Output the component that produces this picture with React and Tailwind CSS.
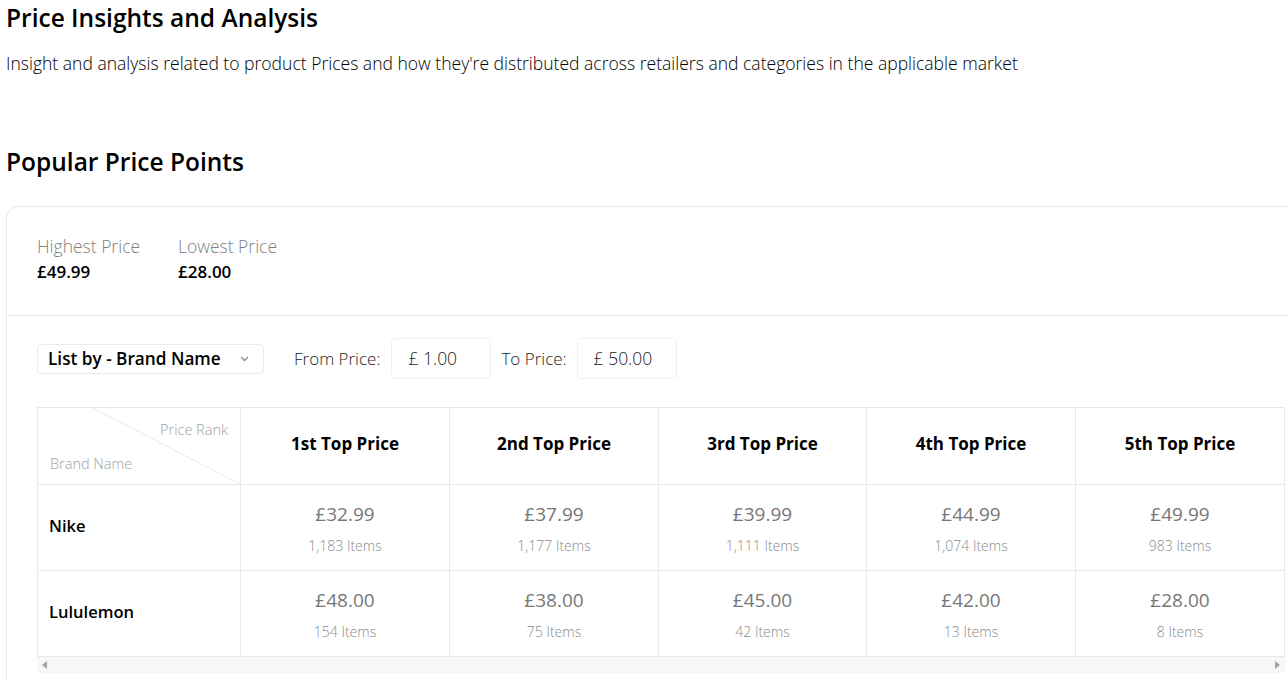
import React from "react";

const cols = ["1st Top Price", "2nd Top Price", "3rd Top Price", "4th Top Price", "5th Top Price"];
const rows = [
  { name: "Nike", cells: [["£32.99", "1,183 Items"], ["£37.99", "1,177 Items"], ["£39.99", "1,111 Items"], ["£44.99", "1,074 Items"], ["£49.99", "983 Items"]] },
  { name: "Lululemon", cells: [["£48.00", "154 Items"], ["£38.00", "75 Items"], ["£45.00", "42 Items"], ["£42.00", "13 Items"], ["£28.00", "8 Items"]] },
];

export default function App() {
  return (
    <div className="h-[681px] w-[1288px] overflow-hidden bg-white text-black" style={{ fontFamily: '"Open Sans", sans-serif' }}>
      <div className="pl-[6px]">
        <h1 className="pt-[2px] text-[24.5px] font-semibold leading-[32px]">Price Insights and Analysis</h1>
        <p className="mt-[18px] whitespace-nowrap text-[17.55px] font-light leading-[22px]">Insight and analysis related to product Prices and how they're distributed across retailers and categories in the applicable market</p>
        <h2 className="mt-[72px] text-[24.5px] font-semibold leading-[32px]">Popular Price Points</h2>
        <div className="mt-[28px] w-[1320px] rounded-[12px] border border-[#e8e8e8] pb-[40px]">
          <div className="flex gap-[38px] px-[30px] pt-[28px] pb-[32px]">
            <div>
              <div className="text-[17.5px] font-light leading-[22px] text-[#808080]">Highest Price</div>
              <div className="mt-[4px] text-[17px] font-semibold leading-[22px]">£49.99</div>
            </div>
            <div>
              <div className="text-[17.5px] font-light leading-[22px] text-[#808080]">Lowest Price</div>
              <div className="mt-[4px] text-[17px] font-semibold leading-[22px]">£28.00</div>
            </div>
          </div>
          <div className="border-t border-[#e8e8e8] px-[30px] pt-[22px]">
            <div className="flex items-center">
              <div className="flex h-[30px] w-[227px] items-center justify-between rounded-[4px] border border-[#ebebeb] pl-[10px] pr-[14px]">
                <span className="text-[17.2px] font-semibold">List by - Brand Name</span>
                <svg width="9" height="6" viewBox="0 0 9 6" fill="none"><path d="M1 1l3.5 3.5L8 1" stroke="#8c8c8c" strokeWidth="1.3" /></svg>
              </div>
              <span className="ml-[30px] text-[17px] font-light text-[#222]">From Price:</span>
              <div className="ml-[11px] flex h-[41px] w-[100px] items-center rounded-[4px] border border-[#f0f0f0] pl-[16px] text-[17.5px] font-light text-[#222]">£ 1.00</div>
              <span className="ml-[10px] text-[17px] font-light text-[#222]">To Price:</span>
              <div className="ml-[10px] flex h-[41px] w-[100px] items-center rounded-[4px] border border-[#f0f0f0] pl-[16px] text-[17.5px] font-light text-[#222]">£ 50.00</div>
            </div>
            <div className="mt-[28px] w-[1248px]">
              <table className="w-[1248px] table-fixed border-collapse">
                <colgroup>
                  <col className="w-[203px]" />
                  <col className="w-[209px]" />
                  <col className="w-[209px]" />
                  <col className="w-[208px]" />
                  <col className="w-[209px]" />
                  <col className="w-[209px]" />
                </colgroup>
                <thead>
                  <tr className="h-[77px]">
                    <th className="relative border border-[#e8e8e8] p-0 font-normal">
                      <svg className="absolute inset-0 h-full w-full" preserveAspectRatio="none" viewBox="0 0 203 77">
                        <line x1="55" y1="0" x2="203" y2="77" stroke="#e8e8e8" strokeWidth="1" />
                      </svg>
                      <div className="absolute right-[12px] top-[11px] text-[14.5px] font-light text-[#a0a0a0]">Price Rank</div>
                      <div className="absolute left-[12px] bottom-[9px] text-[14.5px] font-light text-[#a0a0a0]">Brand Name</div>
                    </th>
                    {cols.map((c) => (
                      <th key={c} className="border border-[#e8e8e8] pb-[4px] text-[17px] font-bold">{c}</th>
                    ))}
                  </tr>
                </thead>
                <tbody>
                  {rows.map((r) => (
                    <tr key={r.name} className="h-[86px]">
                      <td className="border border-[#e8e8e8] pb-[3px] pl-[11px] text-[16.5px] font-semibold">{r.name}</td>
                      {r.cells.map(([p, n], i) => (
                        <td key={i} className="border border-[#e8e8e8] pt-[17px] text-center align-top">
                          <div className="text-[19px] leading-[24px] text-[#777]">{p}</div>
                          <div className="mt-[11px] text-[14px] font-light leading-[18px] text-[#8a8a8a]">{n}</div>
                        </td>
                      ))}
                    </tr>
                  ))}
                </tbody>
              </table>
              <div className="flex h-[16px] w-[1248px] items-center justify-between bg-[#f7f7f7] px-[5px]">
                <svg width="5" height="8" viewBox="0 0 5 8"><path d="M5 0L0 4l5 4z" fill="#a3a3a3" /></svg>
                <svg width="5" height="8" viewBox="0 0 5 8"><path d="M0 0l5 4-5 4z" fill="#a3a3a3" /></svg>
              </div>
            </div>
          </div>
        </div>
      </div>
    </div>
  );
}
